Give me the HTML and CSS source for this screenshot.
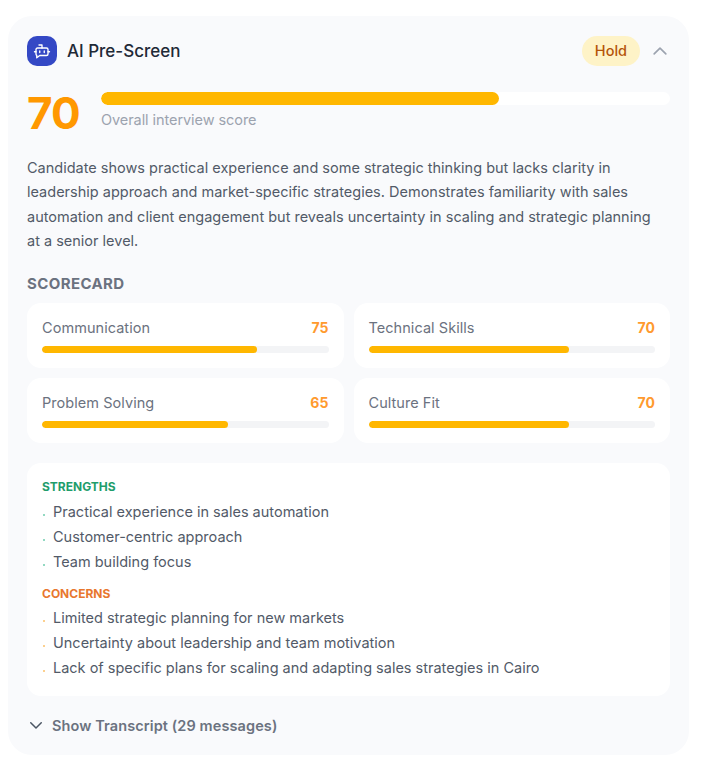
FILE: index.html
```html
<!DOCTYPE html>
<html lang="en">
<head>
<meta charset="utf-8">
<title>AI Pre-Screen</title>
<link rel="stylesheet" href="styles.css">
</head>
<body>
<section class="card">
  <header class="head">
    <span class="logo">
      <svg viewBox="0 0 24 24" width="18" height="18" fill="none" stroke="#fff" stroke-width="1.8" stroke-linecap="round" stroke-linejoin="round">
        <path d="M12 8V4H8"/>
        <path d="M6 8h12a2 2 0 0 1 2 2v6a2 2 0 0 1-2 2H9l-4 3v-3.2A2 2 0 0 1 4 16v-6a2 2 0 0 1 2-2z"/>
        <path d="M2 13h2M20 13h2M9 12v2M15 12v2"/>
      </svg>
    </span>
    <h2 class="title">AI Pre-Screen</h2>
    <span class="badge">Hold</span>
    <svg class="chev-up" viewBox="0 0 24 24" width="20" height="20" fill="none" stroke="#9ca3af" stroke-width="2" stroke-linecap="round" stroke-linejoin="round"><path d="M5 15.5l7-7 7 7"/></svg>
  </header>

  <div class="overall">
    <div class="big">70</div>
    <div class="overall-r">
      <div class="track track-big"><div class="fill" style="width:70%"></div></div>
      <div class="overall-label">Overall interview score</div>
    </div>
  </div>

  <p class="summary">Candidate shows practical experience and some strategic thinking but lacks clarity in leadership approach and market-specific strategies. Demonstrates familiarity with sales automation and client engagement but reveals uncertainty in scaling and strategic planning at a senior level.</p>

  <h3 class="sc-title">SCORECARD</h3>
  <div class="grid">
    <div class="metric"><div class="m-row"><span>Communication</span><b>75</b></div><div class="track"><div class="fill" style="width:75%"></div></div></div>
    <div class="metric"><div class="m-row"><span>Technical Skills</span><b>70</b></div><div class="track"><div class="fill" style="width:70%"></div></div></div>
    <div class="metric"><div class="m-row"><span>Problem Solving</span><b>65</b></div><div class="track"><div class="fill" style="width:65%"></div></div></div>
    <div class="metric"><div class="m-row"><span>Culture Fit</span><b>70</b></div><div class="track"><div class="fill" style="width:70%"></div></div></div>
  </div>

  <div class="notes">
    <h4 class="n-title green">STRENGTHS</h4>
    <ul class="list l-green">
      <li>Practical experience in sales automation</li>
      <li>Customer-centric approach</li>
      <li>Team building focus</li>
    </ul>
    <h4 class="n-title orange">CONCERNS</h4>
    <ul class="list list-tight l-orange">
      <li>Limited strategic planning for new markets</li>
      <li>Uncertainty about leadership and team motivation</li>
      <li>Lack of specific plans for scaling and adapting sales strategies in Cairo</li>
    </ul>
  </div>

  <div class="transcript">
    <svg viewBox="0 0 24 24" width="18" height="18" fill="none" stroke="#4b5563" stroke-width="2" stroke-linecap="round" stroke-linejoin="round"><path d="M5 9l7 7 7-7"/></svg>
    <span>Show Transcript (29 messages)</span>
  </div>
</section>
</body>
</html>
```

FILE: styles.css
```css
* { box-sizing: border-box; }
html, body { margin: 0; background: #fff; }
body { padding: 16px 16px 9px 8px; font-family: Inter, "Noto Sans", sans-serif; color: #4b5563; }
.card { width: 681px; height: 739px; background: #f9fafc; border-radius: 24px; padding: 20px 19px 0; }
.head { display: flex; align-items: center; height: 30px; }
.logo { width: 30px; height: 30px; border-radius: 10px; background: #3448c5; display: flex; align-items: center; justify-content: center; }
.title { margin: 0 0 0 10px; flex: 1; font-size: 17px; font-weight: 500; color: #1f2937; }
.badge { background: #fef3c7; color: #b45309; font-size: 14.5px; font-weight: 500; height: 30px; line-height: 30px; padding: 0 13px; border-radius: 15px; }
.chev-up { margin: 0 0 0 10px; }
.overall { display: flex; margin-top: 22px; height: 50px; }
.big { width: 74px; font-size: 44px; line-height: 50px; font-weight: 700; color: #ff9800; letter-spacing: -0.8px; }
.overall-r { flex: 1; padding-top: 4px; }
.track { height: 7px; background: #f3f4f6; border-radius: 4px; overflow: hidden; }
.track-big { height: 13px; background: #fff; border-radius: 7px; }
.fill { height: 100%; background: #ffb700; border-radius: 7px; }
.overall-label { margin-top: 5px; font-size: 14.5px; line-height: 20px; color: #9ca3af; letter-spacing: -0.07px; }
.summary { margin: 18px 0 0; max-width: 635px; font-size: 14.5px; line-height: 24.3px; color: #525a68; }
.sc-title { margin: 21px 0 0; font-size: 15px; line-height: 20px; font-weight: 700; color: #6b7280; letter-spacing: 0.4px; }
.grid { display: grid; grid-template-columns: 1fr 1fr; gap: 10px; margin-top: 9px; }
.metric { background: #fff; border-radius: 14px; height: 65px; padding: 15px 15px 0; }
.m-row { display: flex; justify-content: space-between; font-size: 14.5px; line-height: 20px; color: #6b7280; letter-spacing: 0.05px; }
.m-row b { color: #ff9a2e; font-weight: 700; font-size: 14px; }
.metric .track { margin-top: 8px; }
.notes { background: #fff; border-radius: 14px; margin-top: 20px; height: 233px; padding: 16px 15px 0; }
.n-title { margin: 0; font-size: 12px; line-height: 16px; font-weight: 700; }
.green { color: #1f9d6b; }
.orange { color: #e8772e; margin-top: 12px; }
.list { list-style: none; margin: 4px 0 0; padding: 0; font-size: 14.5px; color: #525a68; }
.list-tight { margin-top: 3px; }
.list li { height: 25px; line-height: 25px; padding-left: 11px; position: relative; }
.list li::before { content: ""; position: absolute; left: 1px; top: 15px; width: 2px; height: 2px; border-radius: 50%; }
.l-green li::before { background: #6fcdae; }
.l-orange li::before { background: #fbc06a; }
.transcript { display: flex; align-items: center; gap: 7px; margin-top: 20px; font-size: 14.5px; font-weight: 600; color: #6b7280; letter-spacing: 0.1px; }
```
